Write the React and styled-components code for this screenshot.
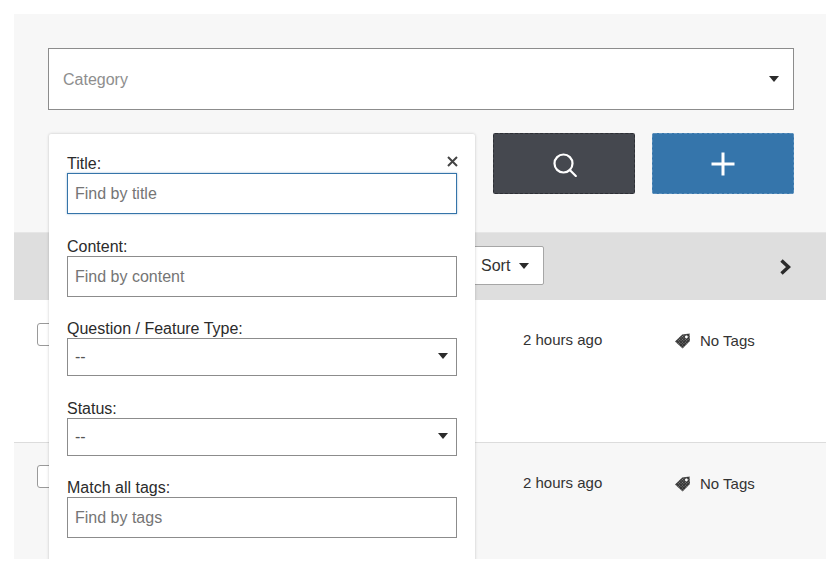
import React from "react";
import styled, { createGlobalStyle } from "styled-components";

const GlobalStyle = createGlobalStyle`
  html, body {
    margin: 0;
    padding: 0;
    background: #fff;
    font-family: "Liberation Sans", Arial, sans-serif;
    color: #333;
  }
`;

const Panel = styled.div`
  position: relative;
  width: 812px;
  height: 545px;
  margin: 14px;
  overflow: hidden;
  background: #f7f7f7;
`;

const TopArea = styled.div`
  height: 218px;
  padding: 34px 32px 0 34px;
  box-sizing: border-box;
`;

const CategorySelect = styled.div`
  display: flex;
  align-items: center;
  justify-content: space-between;
  height: 62px;
  box-sizing: border-box;
  padding: 1px 14px 0;
  background: #fff;
  border: 1px solid #8c8c8c;
  font-size: 16px;
  color: #8e8e8e;
`;

const Caret = styled.span`
  display: block;
  width: 0;
  height: 0;
  margin-bottom: ${(p) => p.$lift || 0}px;
  border-left: 5px solid transparent;
  border-right: 5px solid transparent;
  border-top: 6px solid #2b2b2b;
`;

const ActionRow = styled.div`
  display: flex;
  justify-content: flex-end;
  gap: 17px;
  margin-top: 23px;
`;

const ActionButton = styled.button`
  display: flex;
  align-items: center;
  justify-content: center;
  width: 142px;
  height: 61px;
  padding: ${(p) => p.$nudge || 0}px 0 0 ${(p) => p.$nudge || 0}px;
  background: ${(p) => p.$bg};
  border: 1px dashed ${(p) => p.$edge};
  border-radius: 2px;
`;

const Toolbar = styled.div`
  display: flex;
  align-items: center;
  height: 68px;
  padding-left: 34px;
  box-sizing: border-box;
  background: #dedede;
  border-top: 1px solid #e6e6e6;
`;

const SortButton = styled.button`
  display: flex;
  align-items: center;
  gap: 9px;
  width: 100px;
  height: 39px;
  margin: 0 0 3px 396px;
  padding: 2px 0 0 36px;
  box-sizing: border-box;
  justify-content: flex-start;
  background: #fff;
  border: 1px solid #a6a6a6;
  border-radius: 2px;
  font: 16px "Liberation Sans", Arial, sans-serif;
  color: #333;
`;

const NextLink = styled.span`
  display: flex;
  margin-left: auto;
  margin-right: 34px;
`;

const Row = styled.div`
  position: relative;
  display: flex;
  align-items: flex-start;
  box-sizing: border-box;
  height: ${(p) => p.$height}px;
  padding: 31px 0 0 23px;
  background: ${(p) => (p.$alt ? "#f7f7f7" : "#fff")};
  border-bottom: ${(p) => (p.$alt ? "0" : "1px solid #dcdcdc")};
`;

const Checkbox = styled.span`
  display: block;
  width: 22px;
  height: 23px;
  box-sizing: border-box;
  background: #fff;
  border: 1px solid #9a9a9a;
  border-radius: 3px;
  margin-top: ${(p) => p.$top}px;
`;

const TimeAgo = styled.span`
  margin-left: 464px;
  width: 152px;
  font-size: 15px;
  line-height: 18px;
  color: #333;
`;

const TagInfo = styled.span`
  display: flex;
  align-items: center;
  gap: 9px;
  font-size: 15px;
  line-height: 18px;
  margin-top: 1px;
  margin-left: -1px;
  color: #333;
`;

const FilterPopup = styled.div`
  position: absolute;
  left: 35px;
  top: 120px;
  width: 426px;
  height: 440px;
  box-sizing: border-box;
  padding: 21px 18px 0 18px;
  display: flex;
  flex-direction: column;
  gap: 23.5px;
  background: #fff;
  border-radius: 2px;
  box-shadow: 0 0 3px rgba(0, 0, 0, 0.22);
`;

const CloseButton = styled.span`
  position: absolute;
  top: 22px;
  right: 17px;
  display: flex;
`;

const Field = styled.div`
  display: flex;
  flex-direction: column;
`;

const Label = styled.label`
  height: 18px;
  font-size: 16px;
  line-height: 18px;
  color: #2b2b2b;
`;

const TextInput = styled.div`
  display: flex;
  align-items: center;
  height: 41px;
  box-sizing: border-box;
  padding: 1px 7px 0;
  background: #fff;
  border: 1px solid ${(p) => (p.$focus ? "#3574a9" : "#8c8c8c")};
  box-shadow: ${(p) => (p.$focus ? "0 0 2px rgba(53, 116, 169, 0.5)" : "none")};
  font-size: 16px;
  color: #757575;
`;

const SelectInput = styled.div`
  display: flex;
  align-items: center;
  justify-content: space-between;
  height: 38px;
  box-sizing: border-box;
  padding: 0 8px 0 7px;
  background: #fff;
  border: 1px solid #8c8c8c;
  font-size: 16px;
  color: #555;
`;

const SearchIcon = () => (
  <svg width="24" height="24" viewBox="0 0 24 24" fill="none" stroke="#fff" strokeWidth="2.2">
    <circle cx="10.5" cy="10.5" r="9" />
    <path d="M16.8 17 L22.8 23" strokeLinecap="round" />
  </svg>
);

const PlusIcon = () => (
  <svg width="24" height="24" viewBox="0 0 24 24" fill="none" stroke="#fff" strokeWidth="3">
    <path d="M12 0.5V23.5M0.5 12H23.5" />
  </svg>
);

const ChevronIcon = () => (
  <svg width="13" height="16" viewBox="0 0 13 16" fill="none" stroke="#2b2b2b" strokeWidth="3.4">
    <path d="M2.5 1.5L9.5 8L2.5 14.5" />
  </svg>
);

const CloseIcon = () => (
  <svg width="11" height="11" viewBox="0 0 11 11" fill="none" stroke="#444" strokeWidth="2">
    <path d="M1 1L10 10M10 1L1 10" />
  </svg>
);

const TagIcon = ({ id }) => (
  <svg width="17" height="16" viewBox="0 0 17 16">
    <defs>
      <pattern id={id} width="2" height="2" patternUnits="userSpaceOnUse" patternTransform="rotate(45)">
        <rect width="2" height="2" fill="#333" />
        <rect width="1" height="1" fill="#8a8a8a" />
      </pattern>
    </defs>
    <path d="M8.2 1.6L15.6 0.4L16 8L8.6 15.6L1 8.6Z" fill={`url(#${id})`} />
    <circle cx="12.4" cy="4" r="1.4" fill="#fff" />
  </svg>
);

const rows = [
  { height: 143, boxTop: -8, alt: false },
  { height: 116, boxTop: -9, alt: true },
];

const App = () => (
  <>
    <GlobalStyle />
    <Panel>
      <TopArea>
        <CategorySelect>
          Category
          <Caret $lift={2} />
        </CategorySelect>
        <ActionRow>
          <ActionButton $bg="#45484f" $edge="#2d2f35" $nudge={2}>
            <SearchIcon />
          </ActionButton>
          <ActionButton $bg="#3575ab" $edge="#5b90bd">
            <PlusIcon />
          </ActionButton>
        </ActionRow>
      </TopArea>
      <Toolbar>
        <SortButton>
          Sort
          <Caret />
        </SortButton>
        <NextLink>
          <ChevronIcon />
        </NextLink>
      </Toolbar>
      {rows.map((r, i) => (
        <Row key={i} $height={r.height} $alt={r.alt}>
          <Checkbox $top={r.boxTop} />
          <TimeAgo>2 hours ago</TimeAgo>
          <TagInfo>
            <TagIcon id={`tag-${i}`} />
            No Tags
          </TagInfo>
        </Row>
      ))}
      <FilterPopup>
        <CloseButton>
          <CloseIcon />
        </CloseButton>
        <Field>
          <Label>Title:</Label>
          <TextInput $focus>Find by title</TextInput>
        </Field>
        <Field>
          <Label>Content:</Label>
          <TextInput>Find by content</TextInput>
        </Field>
        <Field>
          <Label>Question / Feature Type:</Label>
          <SelectInput>
            --
            <Caret $lift={2} />
          </SelectInput>
        </Field>
        <Field>
          <Label>Status:</Label>
          <SelectInput>
            --
            <Caret $lift={2} />
          </SelectInput>
        </Field>
        <Field>
          <Label>Match all tags:</Label>
          <TextInput>Find by tags</TextInput>
        </Field>
      </FilterPopup>
    </Panel>
  </>
);

export default App;
